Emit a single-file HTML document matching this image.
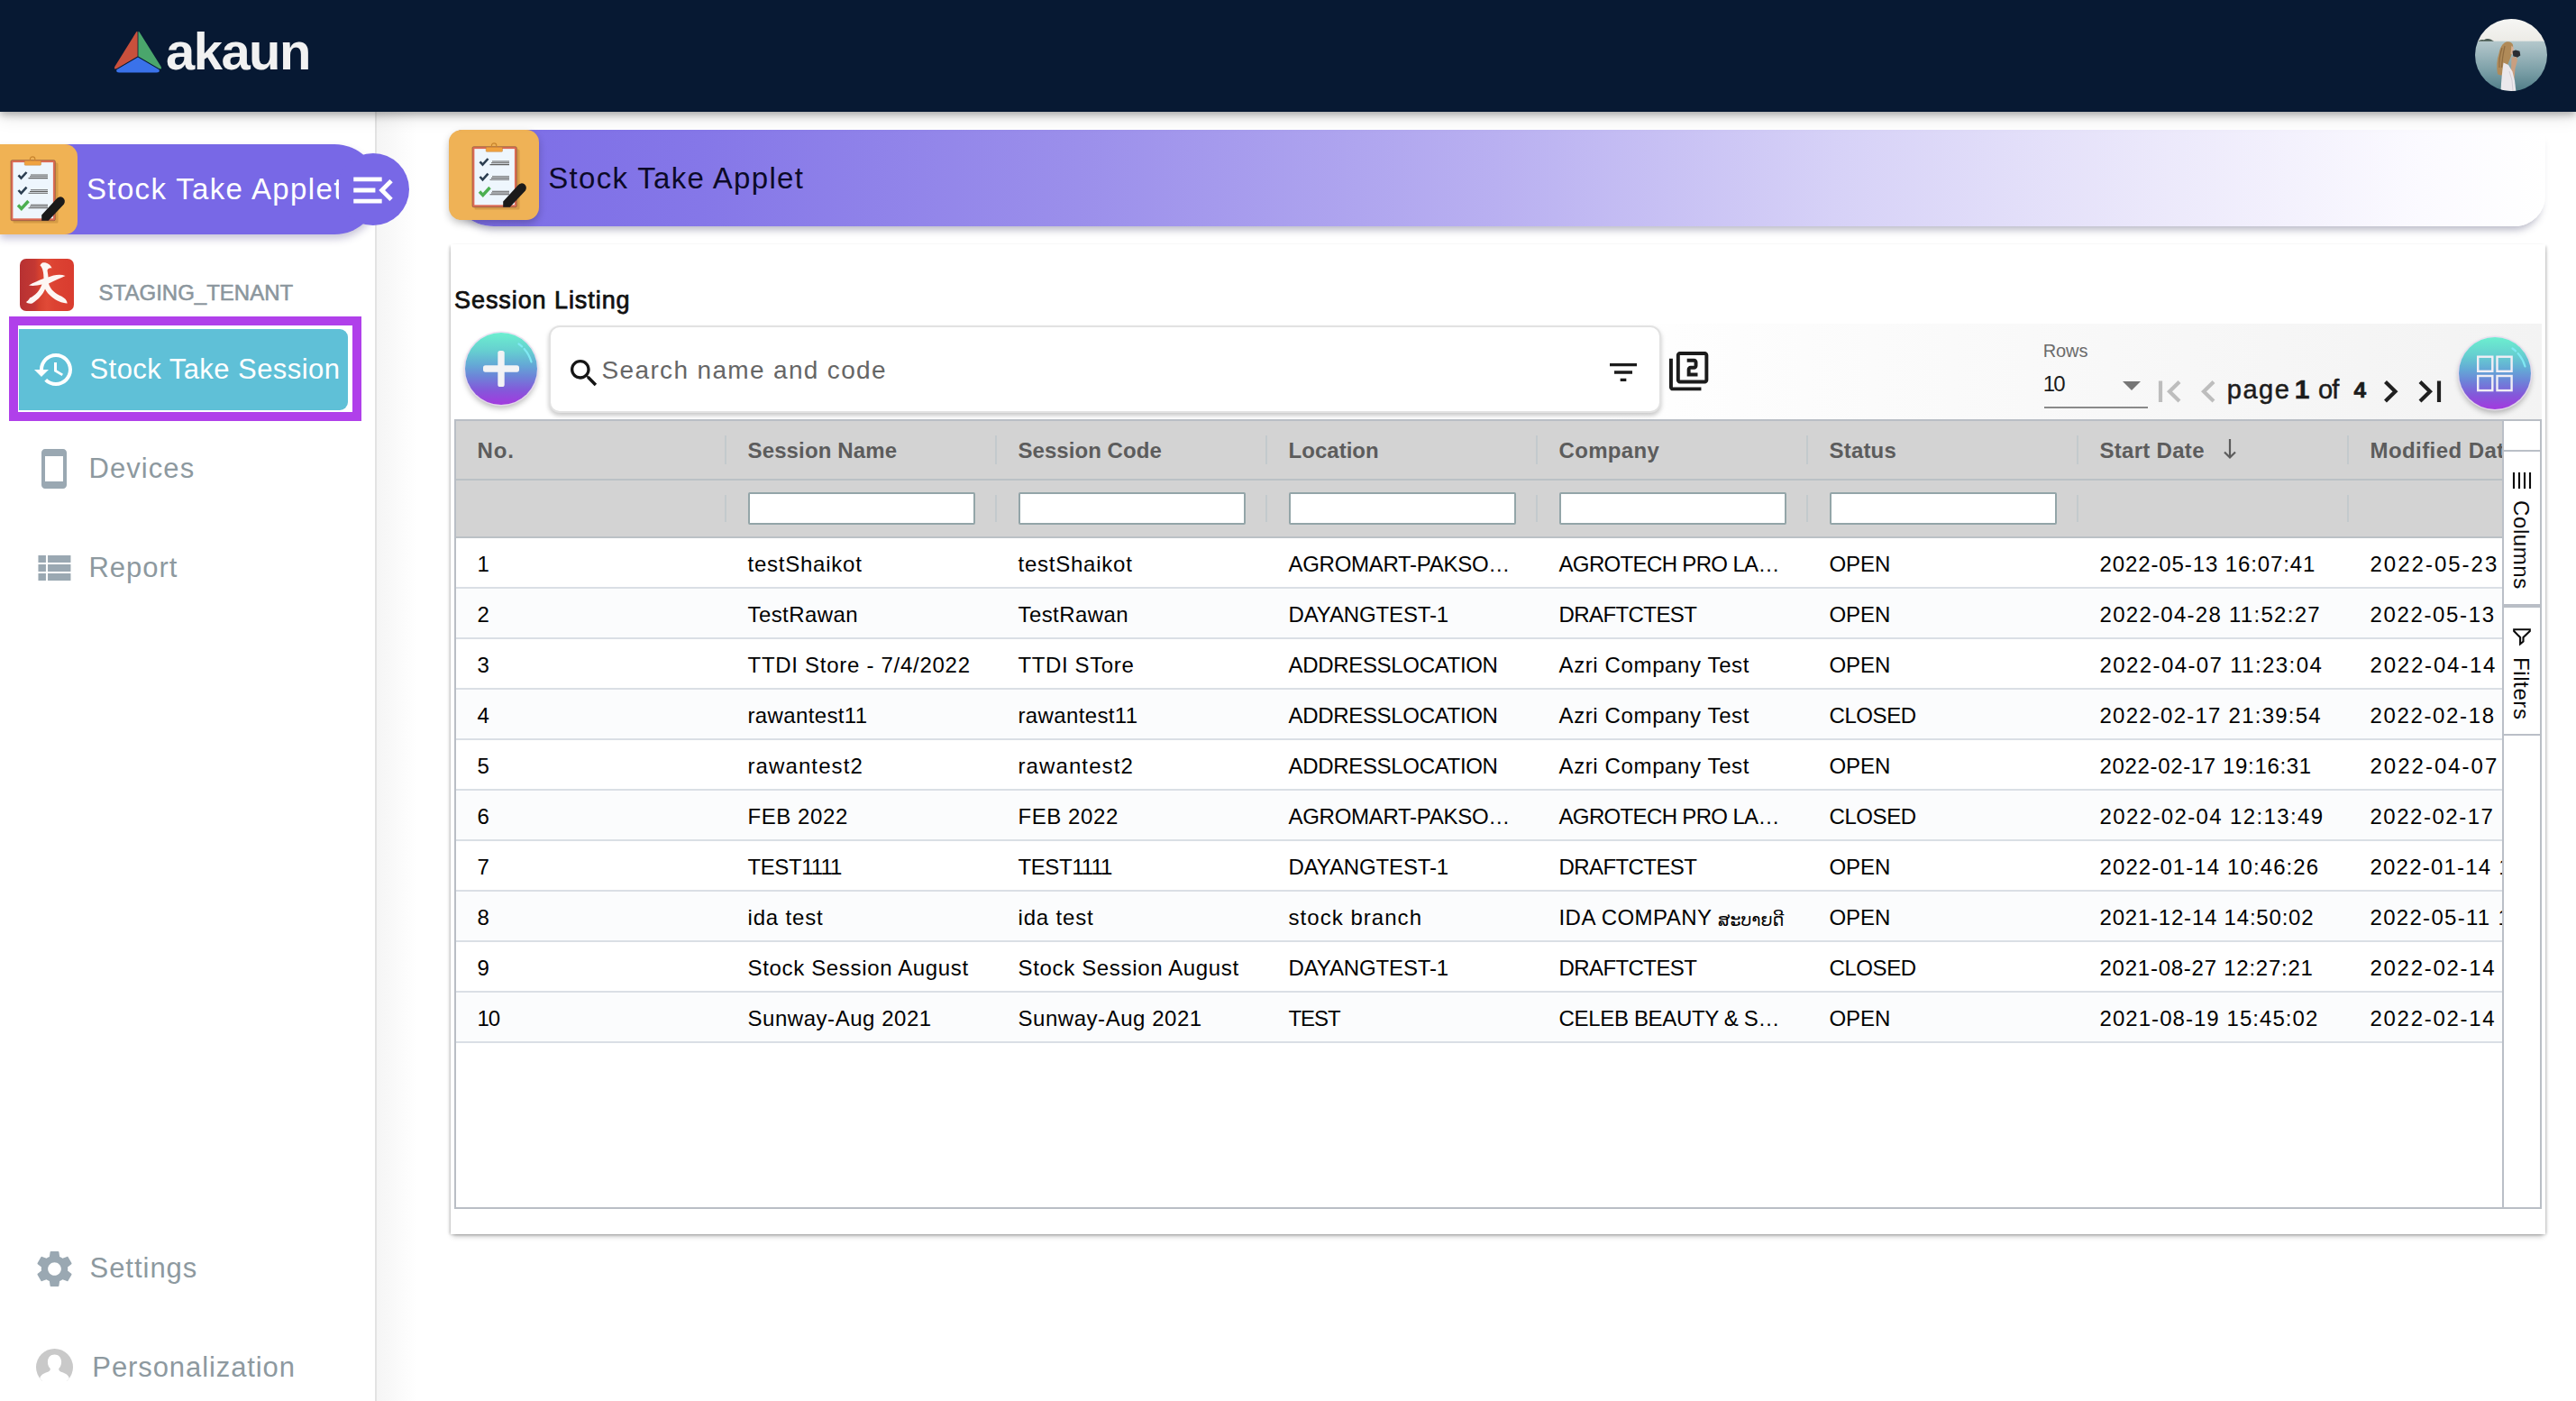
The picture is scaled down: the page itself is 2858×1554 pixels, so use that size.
<!DOCTYPE html>
<html lang="en">
<head>
<meta charset="utf-8">
<title>Stock Take Applet - Session Listing</title>
<style>
html,body{margin:0;padding:0}
body{width:2858px;height:1554px;position:relative;overflow:hidden;background:#fff;font-family:"Liberation Sans","DejaVu Sans",sans-serif;color:#000}
.a{position:absolute}
.t{position:absolute;white-space:nowrap;line-height:1;margin:0;padding:0}
svg{position:absolute;display:block;overflow:visible}
/* ---------- top nav ---------- */
#nav{left:0;top:0;width:2858px;height:124px;background:#071933;box-shadow:0 3px 8px rgba(0,0,0,.28),0 6px 18px rgba(0,0,0,.12);z-index:30}
/* ---------- sidebar ---------- */
#side{left:0;top:124px;width:416px;height:1430px;background:#fff;border-right:2px solid #e3e3e3;z-index:10}
#sideshade{left:418px;top:124px;width:44px;height:1430px;background:linear-gradient(90deg,#f5f5f5,#fff);z-index:1}
#pill{left:0;top:160px;width:421px;height:100px;background:#7868e6;border-radius:0 50px 50px 0;box-shadow:0 5px 9px rgba(60,50,120,.28);z-index:20}
#pillc{left:374px;top:170px;width:80px;height:80px;border-radius:50%;background:#7868e6;z-index:21}
#pillo{left:0;top:160px;width:86px;height:100px;background:#f0b254;border-radius:0 14px 14px 0;z-index:22}
#sel{left:10px;top:351px;width:371px;height:96px;border:10px solid #b040ea;background:#fff;z-index:20}
#teal{left:21px;top:365px;width:365px;height:90px;background:#5fc0d7;border-radius:0 9px 9px 0;z-index:21}
.si{z-index:23}
/* ---------- main ---------- */
#bar{left:498px;top:144px;width:2326px;height:107px;border-radius:16px 0 34px 50px;background:linear-gradient(90deg,#7b6ce6 0%,#8577e8 12%,#9b8feb 30%,#b9b0f1 50%,#d6d1f7 66%,#ece9fb 82%,#fbfaff 94%,#ffffff 100%);box-shadow:0 9px 8px -5px rgba(60,60,100,.36);z-index:3}
#baro{left:498px;top:144px;width:100px;height:100px;background:#efb256;border-radius:14px;box-shadow:0 4px 8px rgba(0,0,0,.22);z-index:4}
#card{left:500px;top:271px;width:2324px;height:1098px;background:#fff;box-shadow:0 4px 6px -2px rgba(0,0,0,.26),-2px 1px 3px -1px rgba(0,0,0,.22),2px 1px 3px -1px rgba(0,0,0,.22);z-index:2}
#tool{left:505px;top:359px;width:2315px;height:107px;background:linear-gradient(90deg,#fff 0,#fff 55%,#fbfbfb 68%,#f7f7f7 83%,#f3f3f3 100%);z-index:3}
#search{left:609px;top:361px;width:1234px;height:97px;background:#fff;border:2px solid #e2e2e2;border-radius:12px;box-shadow:0 3px 5px rgba(0,0,0,.22);box-sizing:border-box;z-index:5}
.fab{width:80px;height:80px;border-radius:50%;background:linear-gradient(180deg,#6eedd2 0%,#6beacf 4%,#66cfd0 25%,#64a8d6 45%,#6c86d8 60%,#8458da 80%,#9d3fde 96%,#a13ade 100%);box-shadow:0 0 0 1.5px rgba(232,218,240,.85),0 4px 6px rgba(0,0,0,.28);z-index:6}
/* ---------- grid ---------- */
#grid{left:504px;top:465px;width:2316px;height:876px;box-sizing:border-box;border:2px solid #b9bec5;background:#fff;z-index:4;overflow:hidden}
#ghead{left:0;top:0;width:2270px;height:129px;background:#d3d3d3}
.hl{position:absolute;left:0;width:2270px;height:2px;background:#bbc1c6}
.rl{position:absolute;left:0;width:2270px;height:2px;background:#dadfe5}
.row{position:absolute;left:0;width:2270px;height:54px}
.alt{background:#fbfcfd}
.sep{position:absolute;width:2px;height:32px;background:#c3cacd}
.fi{position:absolute;width:252px;height:36px;box-sizing:border-box;border:2px solid #93a5a8;background:#fff;border-radius:2px}
.hd{font-weight:bold;color:#5c5c5c;font-size:24px}
.c{font-size:24px;color:#000}
#gside{left:2270px;top:0;width:40px;height:872px;background:#fff;border-left:2px solid #babfc7;box-sizing:content-box}
</style>
</head>
<body>
<!-- NAV -->
<div id="nav" class="a"></div>
<svg style="left:124px;top:30px;z-index:31" width="60" height="56" viewBox="124 30 60 56">
 <path d="M151.2 35.6 Q152.6 33.6 152.6 36.5 L152.6 62.6 L129.6 76 Q125.6 77.6 127.6 73.4 Z" fill="#c9503c"/>
 <path d="M154.6 35.6 Q153.4 33.6 153.4 36.5 L153.4 62.6 L176.4 76 Q180.4 77.6 178.4 73.4 Z" fill="#4aa66c"/>
 <path d="M153 63.6 L176.6 77.3 Q177.6 80.6 173.6 80.6 L132.4 80.6 Q128.4 80.6 129.4 77.3 Z" fill="#3a72ea"/>
</svg>
<div class="t" style="left:184.0px;top:28.4px;font-size:58px;font-weight:bold;letter-spacing:-1.55px;color:#f1f1f1;z-index:31">akaun</div>
<svg style="left:2746px;top:21px;z-index:31" width="80" height="80" viewBox="0 0 80 80">
 <clipPath id="avc"><circle cx="40" cy="40" r="40"/></clipPath>
 <linearGradient id="sky" x1="0" x2="0" y1="0" y2="1"><stop offset="0" stop-color="#f6f6f4"/><stop offset="1" stop-color="#ecebe6"/></linearGradient>
 <linearGradient id="sea" x1="0" x2="0" y1="0" y2="1"><stop offset="0" stop-color="#b4c8cc"/><stop offset=".25" stop-color="#9db7bd"/><stop offset=".6" stop-color="#7a9ea6"/><stop offset="1" stop-color="#4f7c86"/></linearGradient>
 <g clip-path="url(#avc)">
  <rect width="80" height="25" fill="url(#sky)"/>
  <rect y="24.7" width="80" height="56" fill="url(#sea)"/>
  <path d="M3 24.8q3-2.6 7-1.6 3.5-2.3 7.5-.4l3.5 2z" fill="#44574f"/>
  <path d="M34.5 25.6c3.5-.9 6.5.3 7.5 3.2.5 2.5-.2 5-.5 7.5l-1.5 5-3 7.5-3.5 9.5-4.5 4.5-4-1.5c-1.5-8-1-16 1.5-23 1-5.5 3.5-11 8-12.7z" fill="#b08a58"/>
  <path d="M30 32c-2 6-3.5 14-3 22M33 30c-1.5 7-3 15-3.5 24" stroke="#8f6c41" stroke-width="1.2" fill="none"/>
  <path d="M40.5 29.5l2.3 2.5-.3 3.5 1 2.5-2.5 1.5-1.5-1z" fill="#d8b094"/>
  <path d="M41.5 35.8l3.5-1.2 4.5 1.2.8 4.7-3.5 2.3-4.5-1.5z" fill="#2c2d32"/>
  <path d="M40.5 42.5l5.5-.5 1 4-2.5 9-1 12-4 2z" fill="#c99f80"/>
  <path d="M31.5 48.5l5.5 2.5 4.5 7.5 2.5 10 1.5 12.5-17 0c.5-11.5 1.5-22.5 3-32.5z" fill="#ebe8ec"/>
  <path d="M38 58l3 10 1 12" stroke="#d4cfd6" stroke-width="1" fill="none"/>
 </g>
</svg>
<!-- SIDEBAR -->
<div id="side" class="a"></div>
<div id="sideshade" class="a"></div>
<div id="pill" class="a"></div>
<div id="pillc" class="a"></div>
<div id="pillo" class="a"></div>
<div class="a" style="left:96px;top:180px;width:280px;height:60px;overflow:hidden;z-index:22">
 <div class="t" style="left:0px;top:13.2px;font-size:33px;letter-spacing:1.35px;color:#fff">Stock Take Applet</div>
</div>
<svg style="left:10.5px;top:170px;z-index:23" width="62" height="76" viewBox="-1 -4 62 76">
 <rect x="2.5" y="6.5" width="50" height="67" rx="1.5" fill="#7a4a10" opacity=".22"/>
 <rect x="0" y="3.7" width="49.3" height="67" rx="1.5" fill="#dd6c55" stroke="#6b4a3a" stroke-width=".5"/>
 <rect x="2.4" y="6.1" width="44.5" height="62.2" fill="#eef6fd"/>
 <circle cx="24.1" cy="2.6" r="2.7" fill="none" stroke="#c9852e" stroke-width="1.2"/>
 <rect x="15.2" y="4.3" width="18.3" height="5" rx=".8" fill="#f0a23f" stroke="#b9772a" stroke-width=".4"/>
 <path d="M8.5 20.3l3 3.3 6-6.6" fill="none" stroke="#2c3e50" stroke-width="2.6"/>
 <path d="M8.5 37l3 3.3 6-6.6" fill="none" stroke="#2c3e50" stroke-width="2.6"/>
 <path d="M8 53.5l3.8 4 7.7-8.5" fill="none" stroke="#4caf50" stroke-width="3.4"/>
 <g stroke="#5f5f5f" stroke-width="1.1"><path d="M22 20h19M21 21.8h20M19.5 23.6h21.5"/><path d="M22 36.7h19M21 38.5h20M19.5 40.3h21.5"/><path d="M22 53.2h19M21 55h20M19.5 56.8h21.5"/></g>
 <path d="M36.2 66.4l16.5-18 a5 5 0 0 1 8.2 6 l-17.2 18.3 l-7.5 0z" transform="translate(-2 -2)" fill="#1a1a1a"/>
</svg>
<svg class="si" style="left:384.6px;top:182px" width="58" height="58" viewBox="0 0 24 24"><path fill="#fff" d="M3 18h13v-2H3v2zm0-5h10v-2H3v2zm0-7v2h13V6H3zm18 9.59L17.42 12 21 8.41 19.59 7l-5 5 5 5L21 15.59z"/></svg>
<svg class="si" style="left:22px;top:287px" width="60" height="58" viewBox="0 0 60 58">
 <linearGradient id="tg" x1="0" x2="1" y1="0" y2="0"><stop offset="0" stop-color="#b73132"/><stop offset=".28" stop-color="#c43833"/><stop offset=".36" stop-color="#d6412f"/><stop offset=".5" stop-color="#e04a37"/><stop offset=".65" stop-color="#dc4232"/><stop offset="1" stop-color="#d93c2f"/></linearGradient>
 <rect width="60" height="58" rx="7" fill="url(#tg)"/>
 <path d="M25 4.5C29 3.5 34 6 35.5 10.5C33 10 31 11 30.5 13C31 16 31.5 18.5 31.5 20.5C37 18.5 44 16.5 50.5 19C45 21.5 38 24.5 32 27.5C33.5 34 40 39 46 41.5C50 43.5 52.5 46.5 52.7 49.4C47 49.5 40 46.5 35 42C32 39.5 29.5 36.5 28 33.5C26 39 21 45 13.8 49.4C11 50 8 49.5 7 48C9.5 46 10.5 45 11 43.5C17 41 22 35.5 24.5 28.5C20 29.5 14.5 30.5 10 29.5C15 26.5 21 24 26.5 22C26.5 16 25.5 10 22.5 7.5C23 6 24 5 25 4.5Z" fill="#fdf6f3"/>
</svg>
<div class="t" style="left:109.6px;top:312.9px;font-size:24px;color:#8b969d;-webkit-text-stroke:.55px #8b969d;z-index:23">STAGING_TENANT</div>
<div id="sel" class="a"></div>
<div id="teal" class="a"></div>
<svg class="si" style="left:36.4px;top:386px" width="48" height="48" viewBox="0 0 24 24"><path fill="#fff" d="M13 3c-4.97 0-9 4.03-9 9H1l3.89 3.89.07.14L9 12H6c0-3.87 3.13-7 7-7s7 3.13 7 7-3.13 7-7 7c-1.93 0-3.68-.79-4.94-2.06l-1.42 1.42C8.27 19.99 10.51 21 13 21c4.97 0 9-4.03 9-9s-4.03-9-9-9zm-1 5v5l4.28 2.54.72-1.21-3.5-2.08V8H12z"/></svg>
<div class="t" style="left:99.5px;top:394.4px;font-size:31px;letter-spacing:0.44px;color:#fff;z-index:23">Stock Take Session</div>
<svg class="si" style="left:36px;top:496px" width="48" height="48" viewBox="0 0 24 24"><path fill="#9aa8b2" d="M17 1.01L7 1c-1.1 0-1.99.9-1.99 2v18c0 1.1.89 2 1.99 2h10c1.1 0 2-.9 2-2V3c0-1.1-.9-1.99-2-1.99zM17 19H7V5h10v14z"/></svg>
<div class="t" style="left:98.5px;top:504.0px;font-size:31px;letter-spacing:1.07px;color:#8d999f;z-index:23">Devices</div>
<svg class="si" style="left:33.5px;top:606px" width="50.8" height="48" viewBox="0 0 24 24" preserveAspectRatio="none"><path fill="#9aa8b2" d="M4 14h4v-4H4v4zm0 5h4v-4H4v4zM4 9h4V5H4v4zm5 5h12v-4H9v4zm0 5h12v-4H9v4zM9 5v4h12V5H9z"/></svg>
<div class="t" style="left:98.5px;top:613.8px;font-size:31px;letter-spacing:0.97px;color:#8d999f;z-index:23">Report</div>
<svg class="si" style="left:35.5px;top:1382.5px" width="49" height="49" viewBox="0 0 24 24"><path fill="#9aa8b2" d="M19.14 12.94c.04-.3.06-.61.06-.94 0-.32-.02-.64-.07-.94l2.03-1.58c.18-.14.23-.41.12-.61l-1.92-3.32c-.12-.22-.37-.29-.59-.22l-2.39.96c-.5-.38-1.03-.7-1.62-.94l-.36-2.54c-.04-.24-.24-.41-.48-.41h-3.84c-.24 0-.43.17-.47.41l-.36 2.54c-.59.24-1.13.57-1.62.94l-2.39-.96c-.22-.08-.47 0-.59.22L2.74 8.87c-.12.21-.08.47.12.61l2.03 1.58c-.05.3-.09.63-.09.94s.02.64.07.94l-2.03 1.58c-.18.14-.23.41-.12.61l1.92 3.32c.12.22.37.29.59.22l2.39-.96c.5.38 1.03.7 1.62.94l.36 2.54c.05.24.24.41.48.41h3.84c.24 0 .44-.17.47-.41l.36-2.54c.59-.24 1.13-.56 1.62-.94l2.39.96c.22.08.47 0 .59-.22l1.92-3.32c.12-.22.07-.47-.12-.61l-2.01-1.58zM12 15.6c-1.98 0-3.6-1.62-3.6-3.6s1.62-3.6 3.6-3.6 3.6 1.62 3.6 3.6-1.62 3.6-3.6 3.6z"/></svg>
<div class="t" style="left:99.5px;top:1390.6px;font-size:31px;letter-spacing:0.97px;color:#8d999f;z-index:23">Settings</div>
<svg class="si" style="left:39.5px;top:1496px" width="41" height="36" viewBox="0 0 41 36">
 <clipPath id="pvc"><circle cx="20.5" cy="20.5" r="20.5"/></clipPath>
 <g clip-path="url(#pvc)"><rect width="41" height="36" fill="#c9c9c9"/>
 <path d="M20.5 6.5c4.6 0 7.6 3.4 7.6 8.2 0 3-1.2 5.8-2.9 7.4 0 1.9.6 2.8 2.6 3.6 3.8 1.4 7.4 2.6 8.8 6.3l.9 4h-34l.9-4c1.4-3.7 5-4.9 8.8-6.3 2-.8 2.6-1.7 2.6-3.6-1.7-1.6-2.9-4.4-2.9-7.4 0-4.8 3-8.2 7.6-8.2z" fill="#fff"/></g>
</svg>
<div class="t" style="left:102.3px;top:1501.1px;font-size:31px;letter-spacing:0.91px;color:#8d999f;z-index:23">Personalization</div>
<!-- MAIN -->
<div id="bar" class="a"></div>
<div id="baro" class="a"></div>
<svg style="left:522.5px;top:155px;z-index:5" width="62" height="76" viewBox="-1 -4 62 76">
 <rect x="2.5" y="6.5" width="50" height="67" rx="1.5" fill="#7a4a10" opacity=".22"/>
 <rect x="0" y="3.7" width="49.3" height="67" rx="1.5" fill="#dd6c55" stroke="#6b4a3a" stroke-width=".5"/>
 <rect x="2.4" y="6.1" width="44.5" height="62.2" fill="#eef6fd"/>
 <circle cx="24.1" cy="2.6" r="2.7" fill="none" stroke="#c9852e" stroke-width="1.2"/>
 <rect x="15.2" y="4.3" width="18.3" height="5" rx=".8" fill="#f0a23f" stroke="#b9772a" stroke-width=".4"/>
 <path d="M8.5 20.3l3 3.3 6-6.6" fill="none" stroke="#2c3e50" stroke-width="2.6"/>
 <path d="M8.5 37l3 3.3 6-6.6" fill="none" stroke="#2c3e50" stroke-width="2.6"/>
 <path d="M8 53.5l3.8 4 7.7-8.5" fill="none" stroke="#4caf50" stroke-width="3.4"/>
 <g stroke="#5f5f5f" stroke-width="1.1"><path d="M22 20h19M21 21.8h20M19.5 23.6h21.5"/><path d="M22 36.7h19M21 38.5h20M19.5 40.3h21.5"/><path d="M22 53.2h19M21 55h20M19.5 56.8h21.5"/></g>
 <path d="M36.2 66.4l16.5-18 a5 5 0 0 1 8.2 6 l-17.2 18.3 l-7.5 0z" transform="translate(-2 -2)" fill="#1a1a1a"/>
</svg>
<div class="t" style="left:608.2px;top:180.7px;font-size:33px;letter-spacing:1.31px;color:#0c0a27;z-index:5">Stock Take Applet</div>
<div id="card" class="a"></div>
<div class="t" style="left:504.0px;top:320.0px;font-size:27px;letter-spacing:0.93px;color:#111;-webkit-text-stroke:.75px #111;z-index:5">Session Listing</div>
<div id="tool" class="a"></div>
<!-- toolbar -->
<div class="a fab" style="left:516px;top:369px"></div>
<svg style="left:516px;top:369px;z-index:7" width="80" height="80" viewBox="0 0 80 80"><rect x="20" y="36.3" width="40" height="7.4" rx="2.6" fill="#f3f3f5"/><rect x="36.3" y="20" width="7.4" height="40" rx="2.6" fill="#f3f3f5"/><path d="M59.5 12.5q10.5 7.5 14 20" stroke="#80e9f3" stroke-width="2.2" fill="none" stroke-linecap="round" stroke-dasharray="4.5 3.6 30"/></svg>
<div id="search" class="a"></div>
<svg style="left:628px;top:393.5px;z-index:6" width="40" height="40" viewBox="0 0 24 24"><path fill="#151515" d="M15.5 14h-.79l-.28-.27C15.41 12.59 16 11.11 16 9.5 16 5.91 13.09 3 9.5 3S3 5.91 3 9.5 5.91 16 9.5 16c1.61 0 3.09-.59 4.23-1.57l.27.28v.79l5 4.99L20.49 19l-4.99-5zm-6 0C7.01 14 5 11.99 5 9.5S7.01 5 9.5 5 14 7.01 14 9.5 11.99 14 9.5 14z"/></svg>
<div class="t" style="left:667.6px;top:397.1px;font-size:28px;letter-spacing:1.34px;color:#666;z-index:6">Search name and code</div>
<svg style="left:1781.2px;top:392.9px;z-index:6" width="40" height="40" viewBox="0 0 24 24"><path fill="#1b1b1b" d="M10 18h4v-2h-4v2zM3 6v2h18V6H3zm3 7h12v-2H6v2z"/></svg>
<svg style="left:1850px;top:387.6px;z-index:6" width="47.3" height="47.3" viewBox="0 0 24 24"><path fill="#1b1b1b" d="M3 5H1v16c0 1.1.9 2 2 2h16v-2H3V5zm18-4H7c-1.1 0-2 .9-2 2v14c0 1.1.9 2 2 2h14c1.1 0 2-.9 2-2V3c0-1.1-.9-2-2-2zm0 16H7V3h14v14zm-4-4h-4v-2h2c1.1 0 2-.89 2-2V7c0-1.11-.9-2-2-2h-4v2h4v2h-2c-1.1 0-2 .89-2 2v4h6v-2z"/></svg>
<div class="t" style="left:2266.7px;top:378.5px;font-size:20px;letter-spacing:-0.07px;color:#6b6b6b;z-index:6">Rows</div>
<div class="t" style="left:2266.7px;top:414.3px;font-size:24px;letter-spacing:-1.8px;color:#1b1b1b;z-index:6">10</div>
<svg style="left:2355px;top:422.5px;z-index:6" width="20" height="10" viewBox="0 0 20 10"><path d="M0 0h20l-10 10z" fill="#767676"/></svg>
<div class="a" style="left:2267.5px;top:451px;width:115.5px;height:2px;background:#8a8a8a;z-index:6"></div>
<svg style="left:2390px;top:418px;z-index:6" width="325" height="32" viewBox="2390 418 325 32" fill="none" stroke-width="4.2">
 <path d="M2397 422.5v23.5" stroke="#bdbdbd"/><path d="M2418 423.5l-11 10.75 11 10.75" stroke="#bdbdbd"/>
 <path d="M2456 423.5l-11 10.75 11 10.75" stroke="#bdbdbd"/>
 <path d="M2646.5 423.5l11 10.75-11 10.75" stroke="#202020"/>
 <path d="M2685 423.5l11 10.75-11 10.75" stroke="#202020"/><path d="M2706 422.5v23.5" stroke="#202020"/>
</svg>
<div class="t" style="left:2470.7px;top:417.7px;font-size:29px;letter-spacing:1.57px;color:#1c1c1c;-webkit-text-stroke:.5px #1c1c1c;z-index:6">page</div>
<div class="t" style="left:2545.8px;top:416.7px;font-size:30px;font-weight:bold;color:#1c1c1c;-webkit-text-stroke:.5px #1c1c1c;z-index:6">1</div>
<div class="t" style="left:2571.9px;top:417.7px;font-size:29px;letter-spacing:-0.83px;color:#1c1c1c;-webkit-text-stroke:.5px #1c1c1c;z-index:6">of</div>
<div class="t" style="left:2611.5px;top:420.7px;font-size:24.5px;font-weight:bold;color:#1c1c1c;-webkit-text-stroke:.7px #1c1c1c;z-index:6">4</div>
<div class="a fab" style="left:2728px;top:373.5px"></div>
<svg style="left:2728px;top:373.5px;z-index:7" width="80" height="80" viewBox="0 0 80 80"><g fill="none" stroke="#f1eef5" stroke-width="2.4"><rect x="21.2" y="21.7" width="16.1" height="16.1"/><rect x="42.5" y="21.7" width="16.1" height="16.1"/><rect x="21.2" y="43" width="16.1" height="16.1"/><rect x="42.5" y="43" width="16.1" height="16.1"/></g><path d="M59.5 12.5q10.5 7.5 14 20" stroke="#80e9f3" stroke-width="2.2" fill="none" stroke-linecap="round" stroke-dasharray="4.5 3.6 30"/></svg>
<!-- GRID -->
<div id="grid" class="a">
<!--GRIDBODY-->
<div id="ghead" class="a"></div>
<div class="hl" style="top:64px"></div><div class="hl" style="top:128px"></div>
<div class="sep" style="left:298px;top:16px"></div><div class="sep" style="left:298px;top:82px;height:30px"></div>
<div class="sep" style="left:598px;top:16px"></div><div class="sep" style="left:598px;top:82px;height:30px"></div>
<div class="sep" style="left:898px;top:16px"></div><div class="sep" style="left:898px;top:82px;height:30px"></div>
<div class="sep" style="left:1198px;top:16px"></div><div class="sep" style="left:1198px;top:82px;height:30px"></div>
<div class="sep" style="left:1498px;top:16px"></div><div class="sep" style="left:1498px;top:82px;height:30px"></div>
<div class="sep" style="left:1798px;top:16px"></div><div class="sep" style="left:1798px;top:82px;height:30px"></div>
<div class="sep" style="left:2098px;top:16px"></div><div class="sep" style="left:2098px;top:82px;height:30px"></div>
<div class="fi" style="left:324px;top:79px"></div>
<div class="fi" style="left:624px;top:79px"></div>
<div class="fi" style="left:924px;top:79px"></div>
<div class="fi" style="left:1224px;top:79px"></div>
<div class="fi" style="left:1524px;top:79px"></div>
<div class="t hd" style="left:23.5px;top:21.1px;letter-spacing:0.91px">No.</div>
<div class="t hd" style="left:323.5px;top:21.1px;letter-spacing:0.14px">Session Name</div>
<div class="t hd" style="left:623.5px;top:21.1px;letter-spacing:0.05px">Session Code</div>
<div class="t hd" style="left:923.5px;top:21.1px;letter-spacing:0.03px">Location</div>
<div class="t hd" style="left:1223.5px;top:21.1px;letter-spacing:0.32px">Company</div>
<div class="t hd" style="left:1523.5px;top:21.1px;letter-spacing:0.19px">Status</div>
<div class="t hd" style="left:1823.5px;top:21.1px;letter-spacing:0.29px">Start Date</div>
<div class="t hd" style="left:2123.5px;top:21.1px;letter-spacing:0.43px">Modified Date</div>
<div class="row" style="top:130px"></div><div class="rl" style="top:184px"></div>
<div class="t c" style="left:23.5px;top:146.5px">1</div>
<div class="t c" style="left:323.5px;top:146.5px;letter-spacing:0.76px">testShaikot</div>
<div class="t c" style="left:623.5px;top:146.5px;letter-spacing:0.76px">testShaikot</div>
<div class="t c" style="left:923.5px;top:146.5px;letter-spacing:-0.29px">AGROMART-PAKSO…</div>
<div class="t c" style="left:1223.5px;top:146.5px;letter-spacing:-0.65px">AGROTECH PRO LA…</div>
<div class="t c" style="left:1523.5px;top:146.5px;letter-spacing:-0.06px">OPEN</div>
<div class="t c" style="left:1823.5px;top:146.5px;letter-spacing:0.89px">2022-05-13 16:07:41</div>
<div class="t c" style="left:2123.5px;top:146.5px;letter-spacing:2px">2022-05-23 11:42:08</div>
<div class="row alt" style="top:186px"></div><div class="rl" style="top:240px"></div>
<div class="t c" style="left:23.5px;top:202.5px">2</div>
<div class="t c" style="left:323.5px;top:202.5px;letter-spacing:0.41px">TestRawan</div>
<div class="t c" style="left:623.5px;top:202.5px;letter-spacing:0.41px">TestRawan</div>
<div class="t c" style="left:923.5px;top:202.5px;letter-spacing:-0.13px">DAYANGTEST-1</div>
<div class="t c" style="left:1223.5px;top:202.5px;letter-spacing:-0.58px">DRAFTCTEST</div>
<div class="t c" style="left:1523.5px;top:202.5px;letter-spacing:-0.06px">OPEN</div>
<div class="t c" style="left:1823.5px;top:202.5px;letter-spacing:1.28px">2022-04-28 11:52:27</div>
<div class="t c" style="left:2123.5px;top:202.5px;letter-spacing:1.64px">2022-05-13 16:03:52</div>
<div class="row" style="top:242px"></div><div class="rl" style="top:296px"></div>
<div class="t c" style="left:23.5px;top:258.5px">3</div>
<div class="t c" style="left:323.5px;top:258.5px;letter-spacing:0.72px">TTDI Store - 7/4/2022</div>
<div class="t c" style="left:623.5px;top:258.5px;letter-spacing:0.62px">TTDI STore</div>
<div class="t c" style="left:923.5px;top:258.5px;letter-spacing:-0.32px">ADDRESSLOCATION</div>
<div class="t c" style="left:1223.5px;top:258.5px;letter-spacing:0.62px">Azri Company Test</div>
<div class="t c" style="left:1523.5px;top:258.5px;letter-spacing:-0.06px">OPEN</div>
<div class="t c" style="left:1823.5px;top:258.5px;letter-spacing:1.4px">2022-04-07 11:23:04</div>
<div class="t c" style="left:2123.5px;top:258.5px;letter-spacing:1.8px">2022-04-14 10:15:33</div>
<div class="row alt" style="top:298px"></div><div class="rl" style="top:352px"></div>
<div class="t c" style="left:23.5px;top:314.5px">4</div>
<div class="t c" style="left:323.5px;top:314.5px;letter-spacing:0.36px">rawantest11</div>
<div class="t c" style="left:623.5px;top:314.5px;letter-spacing:0.36px">rawantest11</div>
<div class="t c" style="left:923.5px;top:314.5px;letter-spacing:-0.32px">ADDRESSLOCATION</div>
<div class="t c" style="left:1223.5px;top:314.5px;letter-spacing:0.62px">Azri Company Test</div>
<div class="t c" style="left:1523.5px;top:314.5px;letter-spacing:-0.41px">CLOSED</div>
<div class="t c" style="left:1823.5px;top:314.5px;letter-spacing:1.24px">2022-02-17 21:39:54</div>
<div class="t c" style="left:2123.5px;top:314.5px;letter-spacing:1.64px">2022-02-18 09:21:47</div>
<div class="row" style="top:354px"></div><div class="rl" style="top:408px"></div>
<div class="t c" style="left:23.5px;top:370.5px">5</div>
<div class="t c" style="left:323.5px;top:370.5px;letter-spacing:1.1px">rawantest2</div>
<div class="t c" style="left:623.5px;top:370.5px;letter-spacing:1.1px">rawantest2</div>
<div class="t c" style="left:923.5px;top:370.5px;letter-spacing:-0.32px">ADDRESSLOCATION</div>
<div class="t c" style="left:1223.5px;top:370.5px;letter-spacing:0.62px">Azri Company Test</div>
<div class="t c" style="left:1523.5px;top:370.5px;letter-spacing:-0.06px">OPEN</div>
<div class="t c" style="left:1823.5px;top:370.5px;letter-spacing:0.65px">2022-02-17 19:16:31</div>
<div class="t c" style="left:2123.5px;top:370.5px;letter-spacing:2px">2022-04-07 11:20:16</div>
<div class="row alt" style="top:410px"></div><div class="rl" style="top:464px"></div>
<div class="t c" style="left:23.5px;top:426.5px">6</div>
<div class="t c" style="left:323.5px;top:426.5px;letter-spacing:0.57px">FEB 2022</div>
<div class="t c" style="left:623.5px;top:426.5px;letter-spacing:0.57px">FEB 2022</div>
<div class="t c" style="left:923.5px;top:426.5px;letter-spacing:-0.29px">AGROMART-PAKSO…</div>
<div class="t c" style="left:1223.5px;top:426.5px;letter-spacing:-0.65px">AGROTECH PRO LA…</div>
<div class="t c" style="left:1523.5px;top:426.5px;letter-spacing:-0.41px">CLOSED</div>
<div class="t c" style="left:1823.5px;top:426.5px;letter-spacing:1.38px">2022-02-04 12:13:49</div>
<div class="t c" style="left:2123.5px;top:426.5px;letter-spacing:1.51px">2022-02-17 21:36:12</div>
<div class="row" style="top:466px"></div><div class="rl" style="top:520px"></div>
<div class="t c" style="left:23.5px;top:482.5px">7</div>
<div class="t c" style="left:323.5px;top:482.5px"><span style="letter-spacing:-0.4px">TEST</span><span style="letter-spacing:-1px">1111</span></div>
<div class="t c" style="left:623.5px;top:482.5px"><span style="letter-spacing:-0.4px">TEST</span><span style="letter-spacing:-1px">1111</span></div>
<div class="t c" style="left:923.5px;top:482.5px;letter-spacing:-0.13px">DAYANGTEST-1</div>
<div class="t c" style="left:1223.5px;top:482.5px;letter-spacing:-0.58px">DRAFTCTEST</div>
<div class="t c" style="left:1523.5px;top:482.5px;letter-spacing:-0.06px">OPEN</div>
<div class="t c" style="left:1823.5px;top:482.5px;letter-spacing:1.1px">2022-01-14 10:46:26</div>
<div class="t c" style="left:2123.5px;top:482.5px;letter-spacing:1.21px">2022-01-14 10:48:05</div>
<div class="row alt" style="top:522px"></div><div class="rl" style="top:576px"></div>
<div class="t c" style="left:23.5px;top:538.5px">8</div>
<div class="t c" style="left:323.5px;top:538.5px;letter-spacing:0.84px">ida test</div>
<div class="t c" style="left:623.5px;top:538.5px;letter-spacing:0.84px">ida test</div>
<div class="t c" style="left:923.5px;top:538.5px;letter-spacing:1.04px">stock branch</div>
<div class="t c" style="left:1223.5px;top:538.5px;letter-spacing:0.45px">IDA COMPANY <span style="font-family:'DejaVu Sans',sans-serif;font-size:19px;letter-spacing:0;position:relative;top:1px">ສະບາຍດີ</span></div>
<div class="t c" style="left:1523.5px;top:538.5px;letter-spacing:-0.06px">OPEN</div>
<div class="t c" style="left:1823.5px;top:538.5px;letter-spacing:0.79px">2021-12-14 14:50:02</div>
<div class="t c" style="left:2123.5px;top:538.5px;letter-spacing:1.3px">2022-05-11 15:27:44</div>
<div class="row" style="top:578px"></div><div class="rl" style="top:632px"></div>
<div class="t c" style="left:23.5px;top:594.5px">9</div>
<div class="t c" style="left:323.5px;top:594.5px;letter-spacing:0.66px">Stock Session August</div>
<div class="t c" style="left:623.5px;top:594.5px;letter-spacing:0.66px">Stock Session August</div>
<div class="t c" style="left:923.5px;top:594.5px;letter-spacing:-0.13px">DAYANGTEST-1</div>
<div class="t c" style="left:1223.5px;top:594.5px;letter-spacing:-0.58px">DRAFTCTEST</div>
<div class="t c" style="left:1523.5px;top:594.5px;letter-spacing:-0.41px">CLOSED</div>
<div class="t c" style="left:1823.5px;top:594.5px;letter-spacing:0.75px">2021-08-27 12:27:21</div>
<div class="t c" style="left:2123.5px;top:594.5px;letter-spacing:1.71px">2022-02-14 17:05:39</div>
<div class="row alt" style="top:634px"></div><div class="rl" style="top:688px"></div>
<div class="t c" style="left:23.5px;top:650.5px;letter-spacing:-1.2px">10</div>
<div class="t c" style="left:323.5px;top:650.5px;letter-spacing:0.54px">Sunway-Aug 2021</div>
<div class="t c" style="left:623.5px;top:650.5px;letter-spacing:0.54px">Sunway-Aug 2021</div>
<div class="t c" style="left:923.5px;top:650.5px;letter-spacing:-1.09px">TEST</div>
<div class="t c" style="left:1223.5px;top:650.5px;letter-spacing:-0.33px">CELEB BEAUTY &amp; S…</div>
<div class="t c" style="left:1523.5px;top:650.5px;letter-spacing:-0.06px">OPEN</div>
<div class="t c" style="left:1823.5px;top:650.5px;letter-spacing:1.05px">2021-08-19 15:45:02</div>
<div class="t c" style="left:2123.5px;top:650.5px;letter-spacing:1.71px">2022-02-14 17:02:58</div>
<svg style="left:1960px;top:18px" width="16" height="26" viewBox="0 0 16 26"><path d="M8 2v20M2 16.5l6 6 6-6" fill="none" stroke="#5c5c5c" stroke-width="2.2"/></svg>
<div id="gside" class="a">
 <div class="a" style="left:0;top:32px;width:40px;height:2px;background:#babfc7"></div>
 <div class="a" style="left:0;top:203px;width:40px;height:4px;background:#b9bec6"></div>
 <div class="a" style="left:0;top:347px;width:40px;height:2px;background:#babfc7"></div>
 <svg style="left:10px;top:57px" width="20" height="18" viewBox="0 0 20 18"><path d="M1 0v18M7 0v18M13 0v18M19 0v18" stroke="#0a0a0a" stroke-width="2.1" fill="none"/></svg>
 <div class="t" style="left:31px;top:87.7px;font-size:24px;letter-spacing:.6px;color:#0a0a0a;transform-origin:0 0;transform:rotate(90deg)">Columns</div>
 <svg style="left:10px;top:230px" width="20" height="20" viewBox="0 0 20 20"><path d="M1.2 1.2h17.6v1.8l-7.3 7v4.6l-3.4 2.7v-7.3l-6.9-7z" fill="none" stroke="#0a0a0a" stroke-width="2.1" stroke-linejoin="miter"/></svg>
 <div class="t" style="left:31px;top:262px;font-size:24px;letter-spacing:.6px;color:#0a0a0a;transform-origin:0 0;transform:rotate(90deg)">Filters</div>
</div>
<!--/GRIDBODY-->
</div>
</body>
</html>
